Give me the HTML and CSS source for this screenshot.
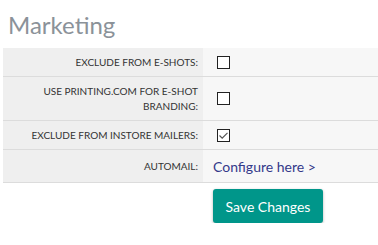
FILE: index.html
```html
<!DOCTYPE html>
<html lang="en">

<head>
  <meta charset="UTF-8" />
  <title>Marketing</title>
  <link rel="stylesheet" href="styles.css">
</head>

<body>
  <div class="panel">
    <h2>Marketing</h2>
    <table class="settings">
      <tr>
        <th>Exclude from e-shots:</th>
        <td><span class="check"></span></td>
      </tr>
      <tr>
        <th>Use printing.com for e-shot branding:</th>
        <td><span class="check"></span></td>
      </tr>
      <tr>
        <th>Exclude from instore mailers:</th>
        <td>
          <span class="check checked">
            <svg width="11" height="11" viewBox="0 0 11 11"><path d="M1.5 5.5 L4.2 8.2 L9.5 2.8" fill="none" stroke="#555" stroke-width="1.2"/></svg>
          </span>
        </td>
      </tr>
      <tr>
        <th>Automail:</th>
        <td><a class="link" href="#">Configure here &gt;</a></td>
      </tr>
    </table>
    <div class="actions">
      <button class="save-btn">Save Changes</button>
    </div>
  </div>
</body>

</html>
```

FILE: styles.css
```css
body {
  margin: 0;
  font-family: Lato, "Open Sans", sans-serif;
  background: #fff;
}

.panel {
  padding-left: 3px;
}

h2 {
  margin: 10px 0 9px 5px;
  font-size: 24px;
  line-height: 29px;
  font-weight: normal;
  color: #8b9299;
}

.settings {
  width: 100%;
  border-collapse: collapse;
}

.settings tr {
  border-bottom: 1px solid #dcdcdc;
}

.settings th {
  width: 190px;
  padding: 7px 5px 6px 5px;
  background: #efefef;
  text-align: right;
  font-weight: normal;
  font-size: 10px;
  line-height: 15px;
  text-transform: uppercase;
  color: #333;
}

.settings td {
  padding: 6px 10px 6px 10px;
  background: #f7f7f7;
  vertical-align: middle;
}

.check {
  display: flex;
  align-items: center;
  justify-content: center;
  width: 11px;
  height: 11px;
  margin-left: 4px;
  border: 1px solid #222;
  background: #fff;
}

.link {
  font-size: 14px;
  line-height: 19px;
  color: #34398a;
  text-decoration: none;
}

.actions {
  padding: 6px 0 0 210px;
}

.save-btn {
  width: 110px;
  height: 34px;
  border: none;
  border-radius: 3px;
  background: #00968a;
  color: #fff;
  font-family: Lato, sans-serif;
  font-size: 14px;
  box-shadow: 0 1px 3px rgba(0, 0, 0, 0.3);
  cursor: pointer;
}
```
